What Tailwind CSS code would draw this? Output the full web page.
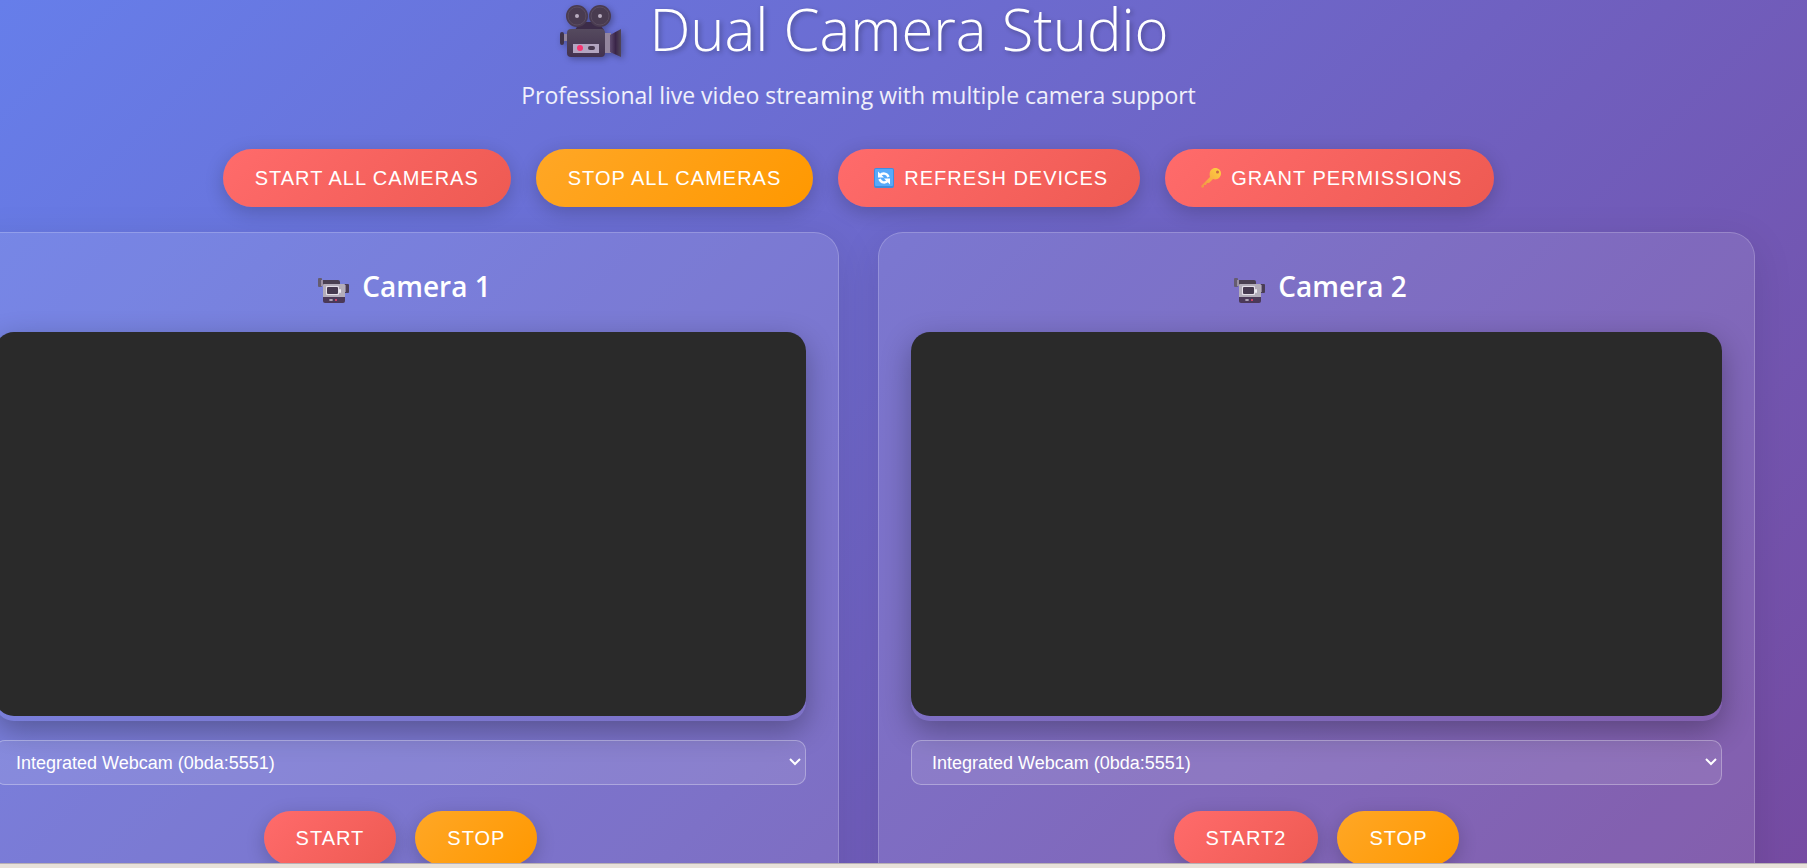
<!DOCTYPE html>
<html lang="en">
<head>
<meta charset="utf-8">
<meta name="viewport" content="width=device-width, initial-scale=1">
<title>Dual Camera Studio</title>
<script src="https://cdn.jsdelivr.net/npm/@tailwindcss/browser@4"></script>
</head>
<body class="flex h-screen flex-col overflow-hidden bg-[linear-gradient(135deg,#667eea_0%,#764ba2_100%)] font-['Open_Sans',sans-serif] text-white">
<svg class="hidden" aria-hidden="true">
  <defs>
    <symbol id="camcorder" viewBox="0 0 31 25">
      <rect x="2" y="2" width="20" height="6" rx="2" fill="#4a4052"/>
      <rect x="0" y="0" width="4" height="9" rx="1" fill="#655c70"/>
      <rect x="3" y="2" width="2" height="6" fill="#9a90a4"/>
      <rect x="26" y="6" width="5" height="9" rx="1" fill="#493d55"/>
      <rect x="26" y="7" width="2" height="7" fill="#887c96"/>
      <rect x="5" y="6" width="22" height="14" rx="1" fill="#b3adba"/>
      <rect x="8" y="8" width="13" height="9" rx="1" fill="#e4dfe8"/>
      <rect x="9" y="9" width="11" height="7" rx="1" fill="#45394f"/>
      <rect x="21" y="11" width="2" height="4" rx="1" fill="#eeeaf2"/>
      <path d="M5 19h22v4a2 2 0 0 1-2 2H7a2 2 0 0 1-2-2z" fill="#4b3958"/>
      <ellipse cx="13" cy="22" rx="2" ry="1" fill="#b5acbd"/>
      <circle cx="18" cy="22" r="1" fill="#f04a70"/>
    </symbol>
  </defs>
</svg>
<main class="min-h-0 flex-1 overflow-hidden">
  <div class="-ml-[38px] mr-[52px]">
    <header class="text-center">
      <h1 class="flex h-[58px] items-center justify-center gap-[27px] pl-3 text-[58px] leading-[58px] font-light [text-shadow:2px_2px_5px_rgba(0,0,0,0.3)]">
        <svg class="mt-1 h-[54px] w-[62px] drop-shadow-[2px_2px_3px_rgba(0,0,0,0.3)]" viewBox="0 0 62 54" aria-hidden="true">
          <defs>
            <linearGradient id="body" x1="0" y1="0" x2="0" y2="1"><stop offset="0" stop-color="#554a5e"/><stop offset="1" stop-color="#43324f"/></linearGradient>
            <linearGradient id="horn" x1="0" y1="0" x2="1" y2="0"><stop offset="0" stop-color="#5f4c70"/><stop offset=".5" stop-color="#3a2548"/><stop offset="1" stop-color="#504658"/></linearGradient>
          </defs>
          <path d="M20 18h18l6 8H15z" fill="#3c2c48"/>
          <rect x="3" y="30" width="6" height="7" fill="#9386a0"/>
          <rect x="0" y="28" width="4" height="13" rx="2" fill="#3f3349"/>
          <rect x="44" y="29" width="7" height="20" fill="#94869e"/>
          <path d="M50 31l11-6v28l-11-5z" fill="url(#horn)"/>
          <rect x="7" y="25" width="38" height="28" rx="4" fill="url(#body)"/>
          <circle cx="17" cy="12" r="11" fill="#493b50"/><circle cx="17" cy="12" r="9" fill="none" stroke="#5a4c60"/>
          <circle cx="40" cy="12" r="11" fill="#493b50"/><circle cx="40" cy="12" r="9" fill="none" stroke="#5a4c60"/>
          <circle cx="17" cy="12" r="2" fill="#b9adc0"/><circle cx="40" cy="12" r="2" fill="#b9adc0"/>
          <rect x="13" y="40" width="26" height="9" fill="#b3a5c0"/>
          <circle cx="20" cy="44" r="3" fill="#f73571"/>
          <rect x="28" y="42" width="7" height="4" rx="2" fill="#49394f"/>
        </svg>
        <span>Dual Camera Studio</span>
      </h1>
      <p class="mt-[21px] text-[23px] leading-8 text-white/90">Professional live video streaming with multiple camera support</p>
    </header>

    <div class="mt-[38px] flex justify-center gap-[25px] font-['Liberation_Sans',sans-serif] text-xl tracking-[1px]">
      <button class="h-[58px] rounded-full bg-[linear-gradient(135deg,#ff6b6b,#ee5a52)] px-8 shadow-[0_5px_19px_rgba(0,0,0,0.2)]">START ALL CAMERAS</button>
      <button class="h-[58px] rounded-full bg-[linear-gradient(135deg,#ffa726,#ff9800)] px-8 shadow-[0_5px_19px_rgba(0,0,0,0.2)]">STOP ALL CAMERAS</button>
      <button class="flex h-[58px] items-center gap-2.5 rounded-full bg-[linear-gradient(135deg,#ff6b6b,#ee5a52)] pr-8 pl-9 shadow-[0_5px_19px_rgba(0,0,0,0.2)]">
        <svg class="size-5" viewBox="0 0 20 20" aria-hidden="true"><rect width="20" height="20" rx="2" fill="#3f8de0"/><rect x="1" y="1" width="18" height="17" rx="1" fill="#58aafa"/><g fill="none" stroke="#fff" stroke-width="2.5"><path d="M6 7.500c2.500-3 7-2.500 8.500 1.500"/><path d="M14 12.500c-2.500 3-7 2.500-8.500-1.500"/></g><path d="M4 3.500v6h6zM16 16.500v-6h-6z" fill="#fff"/></svg>
        <span>REFRESH DEVICES</span>
      </button>
      <button class="flex h-[58px] items-center gap-2.5 rounded-full bg-[linear-gradient(135deg,#ff6b6b,#ee5a52)] pr-8 pl-9 shadow-[0_5px_19px_rgba(0,0,0,0.2)]">
        <svg class="size-5" viewBox="0 0 20 20" aria-hidden="true"><defs><linearGradient id="gold" x1="1" y1="0" x2="0" y2="1"><stop offset="0" stop-color="#ffd43e"/><stop offset="1" stop-color="#f09248"/></linearGradient></defs><path d="M12 0.500c4-1.500 8 1 8 5s-4 7-8 5.500L8 15l-2 0-1 2-2 0 0 2-2 1-1-2L9 9C8 5 9 2 12 .5z" fill="url(#gold)"/><circle cx="16.500" cy="4" r="1.500" fill="#c66a45"/></svg>
        <span>GRANT PERMISSIONS</span>
      </button>
    </div>

    <div class="mt-[25px] grid grid-cols-2 gap-[39px]">
      <section class="h-[720px] rounded-[25px] border border-white/20 bg-white/10 px-8 pt-8 shadow-[0_10px_40px_rgba(0,0,0,0.1)]">
        <h2 class="flex h-[42px] items-center justify-center gap-[13px] pl-2 text-[28px] font-semibold"><svg class="mt-2 h-[25px] w-[31px]" aria-hidden="true"><use href="#camcorder"/></svg>Camera 1</h2>
        <div class="mt-[25px] rounded-[19px] pb-[5px] shadow-[0_10px_30px_rgba(0,0,0,0.3)]"><video class="h-[384px] w-full rounded-[19px] bg-[#2a2a2a]" aria-label="Camera 1"></video></div>
        <div class="relative mt-[19px]">
          <select aria-label="Camera 1 device" class="block h-[45px] w-full appearance-none rounded-[10px] border border-white/30 bg-white/10 px-5 font-['Liberation_Sans',sans-serif] text-lg"><option class="text-black">Integrated Webcam (0bda:5551)</option></select>
          <svg class="pointer-events-none absolute top-[18px] right-[5px] h-2 w-3" viewBox="0 0 12 8" fill="none" stroke="#fff" stroke-width="2" aria-hidden="true"><path d="M1 1l5 5 5-5"/></svg>
        </div>
        <div class="mt-[26px] flex justify-center gap-[19px] font-['Liberation_Sans',sans-serif] text-xl tracking-[1px]">
          <button class="h-[54px] rounded-full bg-[linear-gradient(135deg,#ff6b6b,#ee5a52)] px-8 shadow-[0_5px_19px_rgba(0,0,0,0.2)]">START</button>
          <button class="h-[54px] rounded-full bg-[linear-gradient(135deg,#ffa726,#ff9800)] px-8 shadow-[0_5px_19px_rgba(0,0,0,0.2)]">STOP</button>
        </div>
      </section>
      <section class="h-[720px] rounded-[25px] border border-white/20 bg-white/10 px-8 pt-8 shadow-[0_10px_40px_rgba(0,0,0,0.1)]">
        <h2 class="flex h-[42px] items-center justify-center gap-[13px] pl-2 text-[28px] font-semibold"><svg class="mt-2 h-[25px] w-[31px]" aria-hidden="true"><use href="#camcorder"/></svg>Camera 2</h2>
        <div class="mt-[25px] rounded-[19px] pb-[5px] shadow-[0_10px_30px_rgba(0,0,0,0.3)]"><video class="h-[384px] w-full rounded-[19px] bg-[#2a2a2a]" aria-label="Camera 2"></video></div>
        <div class="relative mt-[19px]">
          <select aria-label="Camera 2 device" class="block h-[45px] w-full appearance-none rounded-[10px] border border-white/30 bg-white/10 px-5 font-['Liberation_Sans',sans-serif] text-lg"><option class="text-black">Integrated Webcam (0bda:5551)</option></select>
          <svg class="pointer-events-none absolute top-[18px] right-[5px] h-2 w-3" viewBox="0 0 12 8" fill="none" stroke="#fff" stroke-width="2" aria-hidden="true"><path d="M1 1l5 5 5-5"/></svg>
        </div>
        <div class="mt-[26px] flex justify-center gap-[19px] font-['Liberation_Sans',sans-serif] text-xl tracking-[1px]">
          <button class="h-[54px] rounded-full bg-[linear-gradient(135deg,#ff6b6b,#ee5a52)] px-8 shadow-[0_5px_19px_rgba(0,0,0,0.2)]">START2</button>
          <button class="h-[54px] rounded-full bg-[linear-gradient(135deg,#ffa726,#ff9800)] px-8 shadow-[0_5px_19px_rgba(0,0,0,0.2)]">STOP</button>
        </div>
      </section>
    </div>
  </div>
</main>
<div class="h-[5px] shrink-0 border-t border-[#b8b0b4] bg-[#e8e1da]"></div>
</body>
</html>
